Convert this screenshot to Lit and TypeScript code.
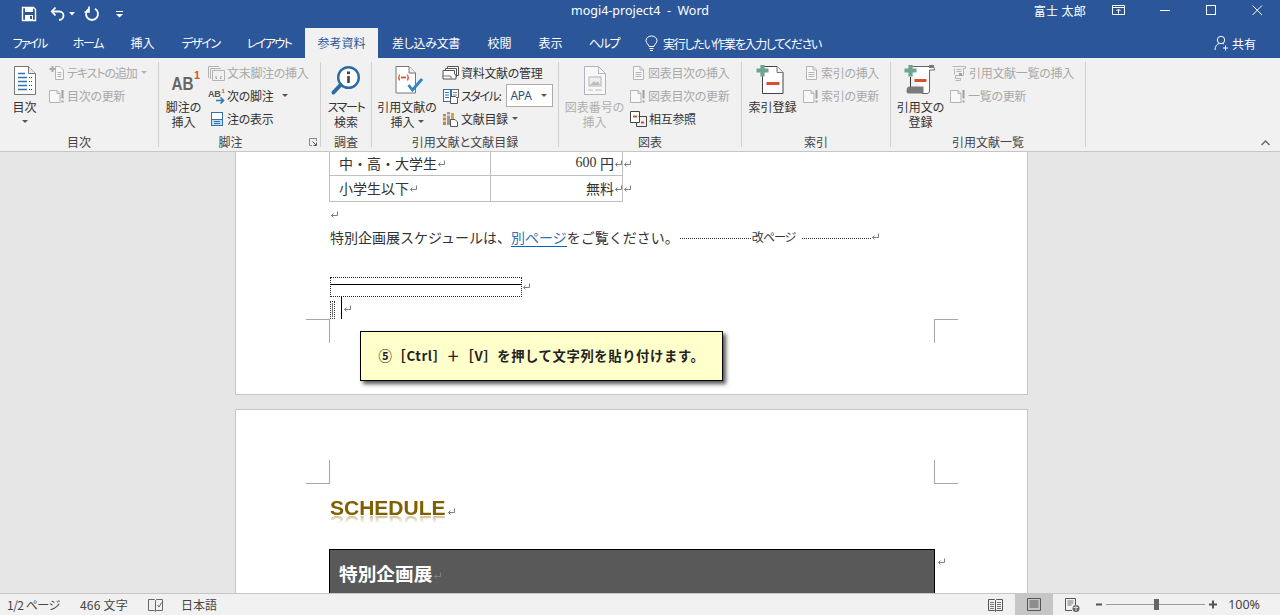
import { LitElement, html, css, svg } from 'lit';
import { customElement } from 'lit/decorators.js';

const icon = (w: number, h: number, body: unknown) =>
  html`<svg class="ico" width=${w} height=${h} viewBox="0 0 ${w} ${h}" fill="none">${body}</svg>`;

const GRAY = '#b4b4b4';
const BLUE = '#2e74b5';
const RED = '#d9512c';
const GREEN = '#6fa58f';

const ret = html`<svg class="ret" width="8" height="8" viewBox="0 0 8 8" fill="none"><path d="M7.5 0.5V4.5H1.5M3.5 2.5L1.5 4.5L3.5 6.5" stroke="#7f7f7f"/></svg>`;

const caret = html`<svg class="caret" width="6" height="3" viewBox="0 0 6 3"><path d="M0 0H6L3 3Z" fill="#555"/></svg>`;
const caretGray = html`<svg class="caret" width="6" height="3" viewBox="0 0 6 3"><path d="M0 0H6L3 3Z" fill="${GRAY}"/></svg>`;

// small page with a "!" beside it, the disabled update icon
const updateIco = icon(17, 16, svg`
  <path d="M.5 2.5H8L11 5.5V14.5H.5Z" stroke="${GRAY}" fill="#f8f8f8"/>
  <path d="M8 2.5V5.5H11" stroke="${GRAY}"/>
  <path d="M13.5 2V10.5M13.5 12.5V14.5" stroke="#a0a0a0" stroke-width="2"/>`);

const pageLines = icon(17, 16, svg`
  <path d="M3.5 1.5H10L13.5 5V14.5H3.5Z" stroke="${GRAY}" fill="#f8f8f8"/>
  <path d="M10 1.5V5H13.5M5.5 7.5H11.5M5.5 9.5H11.5M5.5 11.5H11.5" stroke="${GRAY}"/>`);

const addTextIco = icon(17, 16, svg`
  <path d="M6.5 1.5H11L14.5 5V14.5H6.5Z" stroke="${GRAY}" fill="#f8f8f8"/>
  <path d="M8.5 7.5H12.5M8.5 9.5H12.5M8.5 11.5H12.5" stroke="${GRAY}"/>
  <path d="M3.5 1V7M0.5 4H6.5" stroke="#a9a9a9" stroke-width="2"/>`);

const endnoteIco = icon(18, 16, svg`
  <path d="M.5 13V1.5H11M2.5 14V3.5H13M4.5 15.5V5.5H16.5V15.5Z" stroke="${GRAY}" fill="none"/>
  <path d="M8 11V13.5H9M13 11V13.5H12" stroke="#9a9a9a"/>`);

const nextNoteIco = icon(18, 16, svg`
  <text x="0" y="9" font-family="Liberation Sans" font-weight="700" font-size="9" fill="#555">AB</text>
  <text x="13.5" y="5" font-family="Liberation Sans" font-weight="700" font-size="6" fill="${RED}">1</text>
  <path d="M8 12.5H15M12.5 9.5L15.5 12.5L12.5 15.5" stroke="${BLUE}" stroke-width="1.6"/>`);

const showNoteIco = icon(18, 16, svg`
  <rect x="3.5" y="1.5" width="11" height="13" fill="#fff" stroke="${BLUE}"/>
  <rect x="4" y="8" width="10" height="6" fill="#c9dcee"/>
  <path d="M3.5 8.5H14.5M6 10.5H12M6 12.5H12" stroke="${BLUE}"/>`);

const manageIco = icon(18, 16, svg`
  <path d="M5.5 3.5V1.5H16.5V10.5H14.5M3.5 5.5V3.5H14.5V12" stroke="#555" fill="#fff"/>
  <path d="M1 14V5.5H12.5V9L14 10V14H1Z" stroke="#555" fill="#fff"/>
  <path d="M.5 11H9V14" stroke="#777"/>`);

const styleIco = icon(18, 16, svg`
  <rect x="1.5" y="1.5" width="7" height="12" stroke="${BLUE}" fill="#fff"/>
  <path d="M3 4.5H7M3 7H7M3 9.5H7" stroke="${BLUE}"/>
  <rect x="9.5" y="1.5" width="7" height="8" stroke="#666" fill="#fff"/>
  <path d="M11 4.5H15M11 7H15" stroke="#888"/>
  <path d="M8.5 8.5H13.5L15.5 10.5V15.5H8.5Z" stroke="#555" fill="#fff"/>`);

const biblioIco = icon(18, 16, svg`
  <rect x="1" y="3" width="3" height="11" fill="#b98b3a"/>
  <rect x="5" y="1" width="3" height="13" fill="#999"/>
  <rect x="9" y="2" width="3" height="6" fill="#d3a63f"/>
  <path d="M1 6H4M5 4H8M1 10H4" stroke="#fff"/>
  <path d="M8.5 8.5H13L15.5 11V15.5H8.5Z" stroke="#555" fill="#fff"/>`);

const crossRefIco = icon(18, 16, svg`
  <path d="M.5 .5H9.5V11.5H.5Z" stroke="#444" fill="#fff"/>
  <path d="M3 5.5H7" stroke="${RED}" stroke-width="2"/>
  <path d="M8.5 5.5H16.5V15.5H6.5V12" stroke="#444" fill="none"/>
  <path d="M11 11.5H14" stroke="${RED}" stroke-width="2"/>`);

const citListDisabled = icon(18, 16, svg`
  <path d="M2.5 1.5H15.5V3.5H13.5V10.5H5.5V13.5H10.5V15.5H5.5" stroke="${GRAY}"/>
  <path d="M4.5 3.5V9.5M6.5 4.5H11.5M6.5 6.5H11.5" stroke="${GRAY}"/>
  <rect x="9" y="8" width="3" height="3" fill="#a0a0a0"/>`);

const tocBig = icon(24, 30, svg`
  <path d="M1.5 .5H15.5L22.5 7.5V28.5H1.5Z" fill="#fff" stroke="#777"/>
  <path d="M15.5 .5V7.5H22.5" fill="#e8e8e8" stroke="#777"/>
  <path d="M5 7.5H12M5 11.5H14M5 15.5H14M5 19.5H14M5 23.5H14" stroke="${BLUE}" stroke-width="1.4"/>
  <path d="M16 11.5H19.5M16 15.5H19.5M16 19.5H19.5M16 23.5H19.5" stroke="#3a3a3a" stroke-dasharray="1 1"/>`);

const abBig = icon(32, 24, svg`
  <text x="3.5" y="20.5" font-family="Liberation Sans" font-weight="700" font-size="18" textLength="22" lengthAdjust="spacingAndGlyphs" fill="#666">AB</text>
  <text x="26" y="9.5" font-family="Liberation Sans" font-weight="700" font-size="11" fill="${RED}">1</text>`);

const lensBig = icon(32, 32, svg`
  <circle cx="18.5" cy="12.5" r="10.3" stroke="#2b6ca8" stroke-width="2.4" fill="#fff"/>
  <path d="M10.5 20L3.5 27.5" stroke="#2b6ca8" stroke-width="4" stroke-linecap="round"/>
  <path d="M18.5 11V18" stroke="#444" stroke-width="2.6"/>
  <rect x="17" y="6.5" width="3" height="2.6" fill="#444"/>`);

const citeBig = icon(32, 32, svg`
  <path d="M5 1.5H18L24.5 8V28H5Z" fill="#fff" stroke="#777"/>
  <path d="M18 1.5V8H24.5" fill="#eee" stroke="#777"/>
  <path d="M8.5 9.5Q7 12.5 8.5 15.5M16.5 9.5Q18 12.5 16.5 15.5" stroke="${RED}" stroke-width="1.2"/>
  <path d="M10 12.5H15" stroke="${RED}" stroke-width="1.8"/>
  <path d="M17.5 20L21.5 25L31 14" stroke="#2e84c6" stroke-width="2.8"/>`);

const captionBig = icon(24, 30, svg`
  <path d="M1.5 .5H15.5L22.5 7.5V28.5H1.5Z" fill="#f7f7f7" stroke="#b9b1c2"/>
  <path d="M15.5 .5V7.5H22.5" stroke="#b9b1c2"/>
  <rect x="6" y="11" width="12" height="9" stroke="#b5b5b5" fill="#efefef"/>
  <path d="M7 19L11 15L13 17L15 15L17 19Z" fill="#bcbcbc"/>
  <path d="M5 24H10M12 24H19" stroke="#bcbcbc"/>`);

const indexBig = icon(36, 32, svg`
  <path d="M7.5 1.5H22L28 7.5V28.5H7.5Z" fill="#fff" stroke="#444"/>
  <path d="M22 1.5V7.5H28" fill="#eee" stroke="#777"/>
  <path d="M11.5 18.5H24.5" stroke="${RED}" stroke-width="3"/>
  <path d="M7.5 0V11.5M1.5 5.5H13.5" stroke="${GREEN}" stroke-width="4.2"/>`);

const citeListBig = icon(34, 32, svg`
  <path d="M6.5 1.5H28C29.5 1.5 30.5 2.5 30.5 5H25.5V26C25.5 27.5 24.5 28.5 23 28.5H18" fill="#fff" stroke="#666"/>
  <path d="M6.5 12V22" stroke="#333"/>
  <path d="M25 1.5H30" stroke="#777" stroke-width="3"/>
  <path d="M2.5 26C2.5 23 3.5 21.5 5.5 21.5H19.5V28.5H4.5C3 28.5 2.5 27.5 2.5 26Z" fill="#7a7a7a"/>
  <path d="M10.5 15.5H22.5" stroke="${RED}" stroke-width="3"/>
  <path d="M6.5 0V11.5M.5 5.5H12.5" stroke="${GREEN}" stroke-width="4.2"/>`);

type Row = { ico: unknown; text: string; off?: boolean; drop?: boolean; cls?: string };

// label, tab width, letter spacing
const tabs: [string, number, number][] = [
  ['ファイル', 59, -2], ['ホーム', 58, -1.3], ['挿入', 51, 0], ['デザイン', 65, -1.5], ['レイアウト', 72, -1.6],
  ['参考資料', 73, 0], ['差し込み文書', 96, -0.3], ['校閲', 51, 0], ['表示', 51, 0], ['ヘルプ', 56, -1.3],
];

@customElement('app-root')
export class AppRoot extends LitElement {
  static styles = css`
    :host {
      display: block;
      width: 1280px;
      height: 615px;
      overflow: hidden;
      font-family: "Noto Sans CJK JP", "Noto Sans", sans-serif;
      font-feature-settings: "palt";
      font-size: 12px;
      color: #444;
      background: #e6e6e6;
    }
    .ico, .ret, .caret { display: block; flex: none; }

    .titlebar {
      height: 28px;
      background: #2b579a;
      color: #fff;
      display: flex;
      align-items: center;
      position: relative;
    }
    .qat { display: flex; align-items: center; }
    .qat .save { margin-left: 21px; }
    .qat .undo { margin-left: 13px; }
    .qat .dd { margin-left: 3px; }
    .qat .redo { margin-left: 9px; }
    .qat .cust { margin-left: 16px; }
    .doc-title {
      position: absolute;
      left: 0;
      right: 0;
      top: 0;
      line-height: 21px;
      text-align: center;
      font-family: "Noto Sans", sans-serif;
      font-size: 12.5px;
      white-space: pre;
    }
    .win { margin-left: auto; display: flex; align-items: center; height: 20px; margin-top: -8px; }
    .user { font-size: 12px; letter-spacing: 0.3px; margin-right: 26px; }
    .win .max-rest { margin-right: 34px; }
    .win .min { margin-right: 35px; }
    .win .max { margin-right: 35px; }
    .win .close { margin-right: 17px; }

    .tabs {
      height: 30px;
      background: #2b579a;
      color: #fff;
      display: flex;
      align-items: center;
    }
    .tab {
      height: 30px;
      line-height: 30px;
      text-align: center;
      flex: none;
      font-size: 12px;
      white-space: nowrap;
    }
    .tab.on { background: #f1f1f1; color: #2b579a; }
    .tell { margin-left: 13px; display: flex; align-items: center; gap: 5px; letter-spacing: -1.3px; }
    .share { margin-left: auto; margin-right: 24px; display: flex; align-items: center; gap: 3px; }

    .ribbon {
      height: 94px;
      box-sizing: border-box;
      background: #f1f1f1;
      border-bottom: 1px solid #c6c6c6;
      padding-top: 4px;
      display: flex;
      position: relative;
      white-space: nowrap;
    }
    .group {
      height: 85px;
      box-sizing: border-box;
      border-right: 1px solid #d0d0d0;
      display: flex;
      flex-direction: column;
      flex: none;
      position: relative;
    }
    .group-body { height: 72px; display: flex; }
    .group-label { height: 13px; line-height: 16px; text-align: center; color: #444; }
    .group.launch .group-label { padding-right: 18px; }
    .launcher { position: absolute; right: 3px; bottom: 1px; }
    .big {
      flex: none;
      display: flex;
      flex-direction: column;
      align-items: center;
      line-height: 15px;
      color: #333;
    }
    .big.off { color: #b0b0b0; }
    .big-ico { height: 37px; display: flex; align-items: center; justify-content: center; }
    .cap-line { display: flex; align-items: center; justify-content: center; height: 15px; gap: 3px; }
    .cap-line.tight { letter-spacing: -1.3px; }
    .small-col { display: flex; flex-direction: column; margin-top: -1px; }
    .row { height: 23px; display: flex; align-items: center; color: #333; letter-spacing: -0.3px; }
    .row.off { color: #a8a8a8; }
    .row span { margin-left: 1px; }
    .row.tight { letter-spacing: -1.1px; }
    .row .caret { margin-left: 4px; }
    .row.wide .caret { margin-left: 9px; }
    .style-name { letter-spacing: -1.4px; }
    .select {
      width: 47px;
      height: 23px;
      box-sizing: border-box;
      border: 1px solid #ababab;
      background: #fff;
      margin-left: 6px;
      display: flex;
      align-items: center;
      justify-content: space-between;
      padding: 0 5px 0 3px;
      font-family: "Noto Sans", sans-serif;
      color: #2f4f77;
    }
    .select span { margin: 0; }
    .chevron { position: absolute; right: 10px; top: 82px; }

    .doc {
      height: 441px;
      overflow: hidden;
      background: #e6e6e6;
    }
    .page {
      width: 793px;
      box-sizing: border-box;
      margin-left: 235px;
      background: #fff;
      border: 1px solid #c6c6c6;
      position: relative;
      font-size: 14px;
      font-feature-settings: normal;
      color: #333;
      line-height: 20px;
    }
    .page.first { height: 243px; border-top: 0; padding-left: 94px; }
    .page.second { height: 260px; margin-top: 14px; padding: 88px 0 0 94px; }
    .mark { position: absolute; width: 24px; height: 24px; border: 0 solid #a6a6a6; box-sizing: border-box; }
    .mark.bl { border-width: 1px 1px 0 0; left: 70px; top: 167px; }
    .mark.br { border-width: 1px 0 0 1px; left: 698px; top: 167px; }
    .mark.tl { border-width: 0 1px 1px 0; left: 70px; top: 50px; }
    .mark.tr { border-width: 0 0 1px 1px; left: 698px; top: 50px; }

    .table {
      width: 294px;
      margin-left: -1px;
      border: 1px solid #bfbfbf;
      border-top: 0;
      display: grid;
      grid-template-columns: 160px 1fr;
      box-sizing: border-box;
    }
    .cell {
      display: flex;
      align-items: center;
      padding: 0 0 2px 9px;
      position: relative;
      box-sizing: border-box;
    }
    .cell.r { justify-content: flex-end; padding: 0 0 2px 0; border-left: 1px solid #bfbfbf; }
    .cell.up { height: 24px; border-bottom: 1px solid #bfbfbf; }
    .cell.down { height: 25px; }
    .cell .ret { margin-top: 2px; }
    .cell.r .after { position: absolute; right: -9px; }
    .num { font-family: "Liberation Serif", serif; font-size: 14px; white-space: pre; }

    .empty { height: 25px; display: flex; align-items: center; }
    .para { display: flex; align-items: center; height: 20px; white-space: nowrap; }
    .para a { color: #2e74b5; border-bottom: 1px solid #0563c1; line-height: 18px; margin-top: 1px; text-decoration: none; }
    .dots { border-top: 1px dotted #333; height: 0; margin-top: 3px; }
    .dots.a { width: 71px; margin-left: 1px; }
    .dots.b { width: 69px; margin-left: 7px; }
    .brk { font-size: 12px; font-feature-settings: "palt"; margin-left: 1px; letter-spacing: -1px; }
    .clip-row { display: flex; align-items: center; margin-top: 30px; }
    .clip {
      width: 192px;
      height: 20px;
      box-sizing: border-box;
      border: 1px dotted #222;
      display: flex;
      flex-direction: column;
    }
    .clip i { display: block; height: 1px; background: #000; margin-top: 6px; }
    .paste { display: flex; height: 22px; position: relative; }
    .paste .mini { width: 5px; height: 18px; margin-top: 4px; box-sizing: border-box; border: 1px dotted #333; }
    .paste .mini i { display: block; width: 1px; height: 14px; background: #777; margin: 1px 0 0 1px; }
    .paste .cursor { width: 1px; height: 22px; background: #000; margin-left: 6px; }
    .paste .ret { margin: 8px 0 0 1px; }

    .callout {
      position: absolute;
      left: 124px;
      top: 179px;
      width: 363px;
      height: 50px;
      box-sizing: border-box;
      background: #ffffcc;
      border: 1px solid #000;
      box-shadow: 3px 3px 4px #555;
      display: flex;
      align-items: center;
      justify-content: center;
      font-size: 13.33px;
      font-weight: 700;
      letter-spacing: 0.6px;
      color: #222;
      white-space: nowrap;
    }
    .heading-row { display: flex; align-items: flex-end; }
    .heading {
      font-family: "Liberation Sans", sans-serif;
      font-weight: 700;
      font-size: 21px;
      line-height: 20px;
      height: 18px;
      color: #7f6000;
      -webkit-box-reflect: below -1px linear-gradient(transparent 55%, rgba(255, 255, 255, 0.45));
    }
    .heading-row .ret { margin: 0 0 0 1px; }
    .dark-row { display: flex; margin-top: 33px; margin-left: -1px; }
    .dark {
      width: 606px;
      height: 70px;
      box-sizing: border-box;
      background: #595959;
      border: 1px solid #000;
      color: #fff;
      font-size: 18.67px;
      font-weight: 700;
      padding: 13px 0 0 9px;
      display: flex;
      align-items: flex-start;
      line-height: 20px;
    }
    .dark .ret { margin: 9px 0 0 1px; }
    .dark-row > .ret { margin: 9px 0 0 2px; }

    .status {
      height: 22px;
      box-sizing: border-box;
      border-top: 1px solid #c6c6c6;
      background: #f1f1f1;
      display: flex;
      align-items: center;
      color: #444;
      white-space: nowrap;
    }
    .status .pages { margin-left: 7px; width: 73px; letter-spacing: -0.5px; }
    .status .words { width: 68px; letter-spacing: 0.2px; }
    .status .lang { margin-left: 18px; }
    .views { margin-left: auto; display: flex; align-items: center; height: 21px; }
    .view { width: 38px; height: 21px; display: flex; align-items: center; justify-content: center; }
    .view.on { background: #c6c6c6; }
    .views .read { margin-right: 12px; }
    .zoom { display: flex; align-items: center; margin: 0 20px 0 5px; }
    .zoom .track { width: 99px; height: 1px; background: #9a9a9a; margin: 0 4px; position: relative; }
    .zoom .thumb { position: absolute; left: 48px; top: -5px; width: 5px; height: 11px; background: #666; }
    .zoom .pct { margin-left: 10px; font-family: "Noto Sans", sans-serif; font-size: 12.5px; }
  `;

  private big(width: number, ico: unknown, lines: string[], off = false, drop = false) {
    return html`<div class="big ${off ? 'off' : ''}" style="width:${width}px">
      <div class="big-ico">${ico}</div>
      ${lines.map((l, i) => html`<div class="cap-line ${/^[ァ-ヶー]+$/.test(l) ? 'tight' : ''}">
        ${l}${drop && lines.length > 1 && i === lines.length - 1 ? caret : ''}
      </div>`)}
      ${drop && lines.length === 1 ? html`<div class="cap-line">${caret}</div>` : ''}
    </div>`;
  }

  private rows(items: Row[]) {
    return html`<div class="small-col">
      ${items.map((r) => html`<div class="row ${r.off ? 'off' : ''} ${r.cls ?? ''}">
        ${r.ico}<span>${r.text}</span>${r.drop ? (r.off ? caretGray : caret) : ''}
      </div>`)}
    </div>`;
  }

  private group(width: number, label: string, body: unknown, launch = false) {
    return html`<div class="group ${launch ? 'launch' : ''}" style="width:${width}px">
      <div class="group-body">${body}</div>
      <div class="group-label">${label}</div>
      ${launch
        ? html`<div class="launcher">${icon(8, 8, svg`<path d="M.5 .5H7.5V3M.5 .5V7.5H3" stroke="#888"/><path d="M3.5 3.5L7 7M7.5 4.5V7.5H4.5" stroke="#555"/>`)}</div>`
        : ''}
    </div>`;
  }

  private titlebar() {
    return html`<div class="titlebar">
      <div class="qat">
        <div class="save">${icon(16, 16, svg`<path d="M1.5 1.5H12.5L14.5 3.5V14.5H1.5Z" stroke="#fff" stroke-width="1.4"/><rect x="4" y="2" width="8" height="4" fill="#fff"/><rect x="4" y="9" width="8" height="5.5" fill="#fff"/><rect x="9" y="10" width="2" height="3" fill="#2b579a"/>`)}</div>
        <div class="undo">${icon(16, 16, svg`<path d="M2 5.5H9.5C12 5.5 13.5 7.5 13.5 9.5C13.5 12 11.5 14 9 14" stroke="#fff" stroke-width="1.8"/><path d="M5.5 1.5L1.8 5.5L5.5 9.5" stroke="#fff" stroke-width="1.8"/>`)}</div>
        <div class="dd">${icon(6, 4, svg`<path d="M0 0H6L3 3.5Z" fill="#fff"/>`)}</div>
        <div class="redo">${icon(16, 16, svg`<path d="M5 2.8A6 6 0 1 0 11 2.8" stroke="#fff" stroke-width="1.8"/><path d="M5 0.5V6H0.5" stroke="#fff" stroke-width="1.6"/>`)}</div>
        <div class="cust">${icon(7, 7, svg`<path d="M0 .5H7" stroke="#fff"/><path d="M0 3H7L3.5 6.5Z" fill="#fff"/>`)}</div>
      </div>
      <div class="doc-title">mogi4-project4  -  Word</div>
      <div class="win">
        <div class="user">富士 太郎</div>
        <div class="max-rest">${icon(14, 11, svg`<path d="M.5 .5H12.5V9.5H.5ZM.5 2.5H12.5M6.5 8.5V4.5M4.5 6L6.5 4L8.5 6" stroke="#fff"/>`)}</div>
        <div class="min">${icon(11, 11, svg`<path d="M0 5.5H10" stroke="#fff"/>`)}</div>
        <div class="max">${icon(11, 11, svg`<rect x=".5" y=".5" width="9" height="9" stroke="#fff"/>`)}</div>
        <div class="close">${icon(11, 11, svg`<path d="M.5 .5L10 10M10 .5L.5 10" stroke="#fff"/>`)}</div>
      </div>
    </div>`;
  }

  private tabsBar() {
    return html`<div class="tabs">
      ${tabs.map(([t, w, s]) => html`<div class="tab ${t === '参考資料' ? 'on' : ''}" style="width:${w}px;letter-spacing:${s}px">${t}</div>`)}
      <div class="tell">
        ${icon(13, 17, svg`<path d="M4 11.5C4 9.5 1 8.5 1 5.5C1 3 3.5 1 6.5 1C9.5 1 12 3 12 5.5C12 8.5 9 9.5 9 11.5Z" stroke="#fff"/><path d="M4.5 13.5H8.5M5 15.5H8" stroke="#fff"/>`)}
        <span>実行したい作業を入力してください</span>
      </div>
      <div class="share">
        ${icon(15, 16, svg`<circle cx="7" cy="5" r="3.7" stroke="#fff"/><path d="M1 15C1 11.5 3 9 5 8.5M9 8.5L10 9" stroke="#fff"/><path d="M11.5 10.5V15.5M9 13H14" stroke="#fff"/>`)}
        <span>共有</span>
      </div>
    </div>`;
  }

  private ribbon() {
    return html`<div class="ribbon">
      ${this.group(159, '目次', html`
        ${this.big(49, tocBig, ['目次'], false, true)}
        ${this.rows([
          { ico: addTextIco, text: 'テキストの追加', off: true, drop: true, cls: 'tight' },
          { ico: updateIco, text: '目次の更新', off: true },
        ])}`)}
      ${this.group(162, '脚注', html`
        ${this.big(49, abBig, ['脚注の', '挿入'])}
        ${this.rows([
          { ico: endnoteIco, text: '文末脚注の挿入', off: true },
          { ico: nextNoteIco, text: '次の脚注', drop: true, cls: 'wide' },
          { ico: showNoteIco, text: '注の表示' },
        ])}`, true)}
      ${this.group(51, '調査', this.big(50, lensBig, ['スマート', '検索']))}
      ${this.group(187, '引用文献と文献目録', html`
        ${this.big(70, citeBig, ['引用文献の', '挿入'], false, true)}
        <div class="small-col">
          <div class="row">${manageIco}<span>資料文献の管理</span></div>
          <div class="row">${styleIco}<span class="style-name">スタイル:</span>
            <div class="select"><span>APA</span>${caret}</div>
          </div>
          <div class="row">${biblioIco}<span>文献目録</span>${caret}</div>
        </div>`)}
      ${this.group(183, '図表', html`
        ${this.big(71, captionBig, ['図表番号の', '挿入'], true)}
        ${this.rows([
          { ico: pageLines, text: '図表目次の挿入', off: true },
          { ico: updateIco, text: '図表目次の更新', off: true },
          { ico: crossRefIco, text: '相互参照' },
        ])}`)}
      ${this.group(149, '索引', html`
        ${this.big(61, indexBig, ['索引登録'])}
        ${this.rows([
          { ico: pageLines, text: '索引の挿入', off: true },
          { ico: updateIco, text: '索引の更新', off: true },
        ])}`)}
      ${this.group(195, '引用文献一覧', html`
        ${this.big(59, citeListBig, ['引用文の', '登録'])}
        ${this.rows([
          { ico: citListDisabled, text: '引用文献一覧の挿入', off: true },
          { ico: updateIco, text: '一覧の更新', off: true },
        ])}`)}
      <div class="chevron">${icon(9, 6, svg`<path d="M.5 5L4.5 1L8.5 5" stroke="#666" stroke-width="1.4"/>`)}</div>
    </div>`;
  }

  private doc() {
    return html`<div class="doc">
      <div class="page first">
        <div class="table">
          <div class="cell up">中・高・大学生${ret}</div>
          <div class="cell r up"><span class="num">600 </span>円${ret}<span class="after">${ret}</span></div>
          <div class="cell down">小学生以下${ret}</div>
          <div class="cell r down">無料${ret}<span class="after">${ret}</span></div>
        </div>
        <div class="empty">${ret}</div>
        <div class="para">
          特別企画展スケジュールは、<a>別ページ</a>をご覧ください。
          <div class="dots a"></div><span class="brk">改ページ</span><div class="dots b"></div>${ret}
        </div>
        <div class="clip-row"><div class="clip"><i></i></div>${ret}</div>
        <div class="paste"><div class="mini"><i></i></div><div class="cursor"></div>${ret}</div>
        <div class="mark bl"></div>
        <div class="mark br"></div>
        <div class="callout">⑤［Ctrl］＋［V］を押して文字列を貼り付けます。</div>
      </div>
      <div class="page second">
        <div class="mark tl"></div>
        <div class="mark tr"></div>
        <div class="heading-row"><div class="heading">SCHEDULE</div>${ret}</div>
        <div class="dark-row"><div class="dark">特別企画展${ret}</div>${ret}</div>
      </div>
    </div>`;
  }

  private status() {
    return html`<div class="status">
      <div class="pages">1/2 ページ</div>
      <div class="words">466 文字</div>
      ${icon(15, 14, svg`<path d="M.5 1.5H6.5L7.5 2.5L8.5 1.5H14.5V12.5H8.5L7.5 13.5L6.5 12.5H.5ZM7.5 2.5V13" stroke="#666"/><path d="M9.5 7L11 9L13.5 4.5" stroke="#666"/>`)}
      <div class="lang">日本語</div>
      <div class="views">
        <div class="read">${icon(15, 14, svg`<path d="M.5 1.5H6.5L7.5 2.5L8.5 1.5H14.5V12.5H8.5L7.5 13.5L6.5 12.5H.5ZM7.5 2.5V13" stroke="#555"/><path d="M2 4.5H6M2 6.5H6M2 8.5H6M2 10.5H6M9 4.5H13M9 6.5H13M9 8.5H13M9 10.5H13" stroke="#777"/>`)}</div>
        <div class="view on">${icon(14, 13, svg`<path d="M.5 .5H13.5V12.5H.5Z" stroke="#555"/><path d="M2.5 3H11.5M2.5 5H11.5M2.5 7H11.5M2.5 9H11.5" stroke="#555"/>`)}</div>
        <div class="view">${icon(15, 14, svg`<path d="M.5 .5H10.5V10M.5 .5V12.5H7" stroke="#555"/><path d="M2.5 3H8.5M2.5 5H8.5M2.5 7H6.5" stroke="#777"/><circle cx="11" cy="10.5" r="3.5" fill="#666"/><path d="M8.5 9.5H13M11 7.5V13" stroke="#ddd"/>`)}</div>
      </div>
      <div class="zoom">
        ${icon(6, 3, svg`<rect y=".5" width="6" height="2" fill="#555"/>`)}
        <div class="track"><div class="thumb"></div></div>
        ${icon(9, 9, svg`<path d="M0 4.5H8M4 .5V8.5" stroke="#555" stroke-width="2"/>`)}
        <div class="pct">100%</div>
      </div>
    </div>`;
  }

  render() {
    return html`${this.titlebar()}${this.tabsBar()}${this.ribbon()}${this.doc()}${this.status()}`;
  }
}
